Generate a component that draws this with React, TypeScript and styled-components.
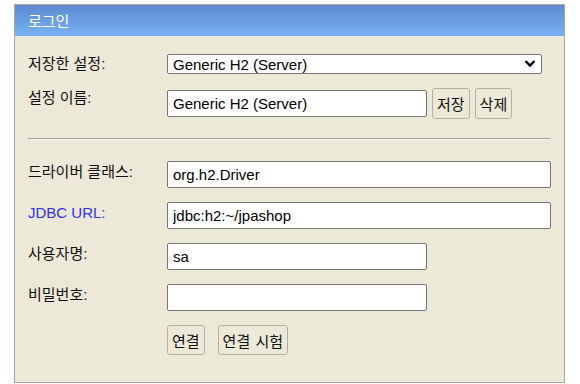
import React from 'react'
import styled, { createGlobalStyle } from 'styled-components'

const GlobalStyle = createGlobalStyle`
  html, body {
    margin: 0;
    padding: 0;
    background: #ffffff;
  }
  body {
    font-family: 'Liberation Sans', 'Noto Sans CJK KR', sans-serif;
    font-size: 15px;
    color: #000000;
  }
`

const Page = styled.div`
  padding: 4px 0 0 14px;
`

const LoginBox = styled.div`
  width: 549px;
  height: 377px;
  border: 1px solid #aca899;
  background: #ece9d8;
  box-sizing: content-box;
`

const Header = styled.div`
  height: 31px;
  padding-left: 13px;
  display: flex;
  align-items: center;
  background: linear-gradient(to bottom, #5a8acf, #7ab3f5);
  color: #ffffff;
  font-size: 15px;
  font-family: 'Noto Sans CJK KR', sans-serif;
`

const Form = styled.div`
  padding: 18px 0 0 13px;
  display: flex;
  flex-direction: column;
`

const Row = styled.div<{ $gap?: number }>`
  display: grid;
  grid-template-columns: 139px auto;
  align-items: start;
  margin-bottom: ${(p) => p.$gap ?? 14}px;
`

const Label = styled.div<{ $blue?: boolean; $top?: number }>`
  font-family: 'Liberation Sans', 'Noto Sans CJK KR', sans-serif;
  font-size: 15px;
  line-height: 20px;
  padding-top: ${(p) => p.$top ?? 1}px;
  color: ${(p) => (p.$blue ? '#3030f0' : '#111111')};
`

const Fields = styled.div`
  display: flex;
  align-items: center;
  gap: 5px;
`

const SelectWrap = styled.div`
  position: relative;
  width: 375px;
  height: 20px;
`

const Select = styled.select`
  appearance: none;
  width: 100%;
  height: 100%;
  box-sizing: border-box;
  border: 1px solid #767676;
  border-radius: 2px;
  background: #ffffff;
  padding: 0 0 0 5px;
  font-family: 'Liberation Sans', sans-serif;
  font-size: 15px;
  color: #000000;
  outline: none;
`

const Chevron = styled.svg`
  position: absolute;
  right: 6px;
  top: 5px;
  pointer-events: none;
`

const Input = styled.input<{ $wide?: boolean }>`
  width: ${(p) => (p.$wide ? 384 : 260)}px;
  height: 27px;
  box-sizing: border-box;
  border: 1px solid #767676;
  border-radius: 2px;
  background: #ffffff;
  padding: 0 5px;
  font-family: 'Liberation Sans', sans-serif;
  font-size: 15px;
  color: #000000;
  outline: none;
`

const Button = styled.button<{ $h?: number }>`
  height: ${(p) => p.$h ?? 31}px;
  padding: 0 4px;
  border: 1px solid #b4b0a2;
  border-radius: 3px;
  background: #ece9d8;
  font-family: 'Noto Sans CJK KR', sans-serif;
  font-size: 15px;
  word-spacing: 2px;
  color: #111111;
  white-space: nowrap;
`

const Divider = styled.div`
  width: 522px;
  height: 0;
  border-top: 1px solid #a0a0a0;
  border-left: 1px solid #a0a0a0;
  border-bottom: 1px solid #f6f5ef;
  margin: 0 0 21px 0;
`

const Actions = styled.div`
  display: flex;
  gap: 13px;
`

export default function App() {
  return (
    <>
      <GlobalStyle />
      <Page>
        <LoginBox>
          <Header>로그인</Header>
          <Form>
            <Row $gap={14}>
              <Label $top={0}>저장한 설정:</Label>
              <SelectWrap>
                <Select defaultValue="server">
                  <option value="server">Generic H2 (Server)</option>
                  <option value="embedded">Generic H2 (Embedded)</option>
                </Select>
                <Chevron width="12" height="9" viewBox="0 0 12 9">
                  <path d="M1.5 2 L6 6.5 L10.5 2" fill="none" stroke="#000" strokeWidth="2.4" />
                </Chevron>
              </SelectWrap>
            </Row>
            <Row $gap={19}>
              <Label $top={0}>설정 이름:</Label>
              <Fields>
                <Input defaultValue="Generic H2 (Server)" />
                <Button>저장</Button>
                <Button>삭제</Button>
              </Fields>
            </Row>
            <Divider />
            <Row>
              <Label>드라이버 클래스:</Label>
              <Input $wide defaultValue="org.h2.Driver" />
            </Row>
            <Row>
              <Label $blue>JDBC URL:</Label>
              <Input $wide defaultValue="jdbc:h2:~/jpashop" />
            </Row>
            <Row>
              <Label>사용자명:</Label>
              <Input defaultValue="sa" />
            </Row>
            <Row>
              <Label>비밀번호:</Label>
              <Input type="password" />
            </Row>
            <Row>
              <div />
              <Actions>
                <Button $h={30}>연결</Button>
                <Button $h={30}>연결 시험</Button>
              </Actions>
            </Row>
          </Form>
        </LoginBox>
      </Page>
    </>
  )
}
